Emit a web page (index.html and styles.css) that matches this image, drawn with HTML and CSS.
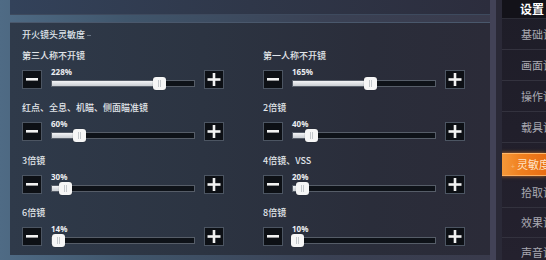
FILE: index.html
```html
<!DOCTYPE html>
<html lang="zh">
<head>
<meta charset="utf-8">
<title>灵敏度设置</title>
<link rel="stylesheet" href="styles.css">
</head>
<body>
<div class="screen">
  <div class="stage">
    <div class="top-panel"></div>
    <section class="panel">
      <h2 class="title">开火镜头灵敏度<span class="title-line"></span></h2>
      <div class="grid">
        <div class="setting">
          <div class="label">第三人称不开镜</div>
          <div class="ctrl">
            <button class="btn"><svg width="20" height="19" viewBox="0 0 20 19"><rect x="4" y="8" width="12" height="2.6" fill="#f2f2f2"/></svg></button>
            <div class="slider" style="--v:0.76">
              <div class="pct">228%</div>
              <div class="track"><div class="fill"></div><div class="thumb"></div></div>
            </div>
            <button class="btn"><svg width="20" height="19" viewBox="0 0 20 19"><rect x="3.5" y="8.2" width="13" height="2.6" fill="#f2f2f2"/><rect x="8.7" y="3" width="2.6" height="13" fill="#f2f2f2"/></svg></button>
          </div>
        </div>
        <div class="setting">
          <div class="label">第一人称不开镜</div>
          <div class="ctrl">
            <button class="btn"><svg width="20" height="19" viewBox="0 0 20 19"><rect x="4" y="8" width="12" height="2.6" fill="#f2f2f2"/></svg></button>
            <div class="slider" style="--v:0.55">
              <div class="pct">165%</div>
              <div class="track"><div class="fill"></div><div class="thumb"></div></div>
            </div>
            <button class="btn"><svg width="20" height="19" viewBox="0 0 20 19"><rect x="3.5" y="8.2" width="13" height="2.6" fill="#f2f2f2"/><rect x="8.7" y="3" width="2.6" height="13" fill="#f2f2f2"/></svg></button>
          </div>
        </div>
        <div class="setting">
          <div class="label">红点、全息、机瞄、侧面瞄准镜</div>
          <div class="ctrl">
            <button class="btn"><svg width="20" height="19" viewBox="0 0 20 19"><rect x="4" y="8" width="12" height="2.6" fill="#f2f2f2"/></svg></button>
            <div class="slider" style="--v:0.2">
              <div class="pct">60%</div>
              <div class="track"><div class="fill"></div><div class="thumb"></div></div>
            </div>
            <button class="btn"><svg width="20" height="19" viewBox="0 0 20 19"><rect x="3.5" y="8.2" width="13" height="2.6" fill="#f2f2f2"/><rect x="8.7" y="3" width="2.6" height="13" fill="#f2f2f2"/></svg></button>
          </div>
        </div>
        <div class="setting">
          <div class="label">2倍镜</div>
          <div class="ctrl">
            <button class="btn"><svg width="20" height="19" viewBox="0 0 20 19"><rect x="4" y="8" width="12" height="2.6" fill="#f2f2f2"/></svg></button>
            <div class="slider" style="--v:0.133">
              <div class="pct">40%</div>
              <div class="track"><div class="fill"></div><div class="thumb"></div></div>
            </div>
            <button class="btn"><svg width="20" height="19" viewBox="0 0 20 19"><rect x="3.5" y="8.2" width="13" height="2.6" fill="#f2f2f2"/><rect x="8.7" y="3" width="2.6" height="13" fill="#f2f2f2"/></svg></button>
          </div>
        </div>
        <div class="setting">
          <div class="label">3倍镜</div>
          <div class="ctrl">
            <button class="btn"><svg width="20" height="19" viewBox="0 0 20 19"><rect x="4" y="8" width="12" height="2.6" fill="#f2f2f2"/></svg></button>
            <div class="slider" style="--v:0.1">
              <div class="pct">30%</div>
              <div class="track"><div class="fill"></div><div class="thumb"></div></div>
            </div>
            <button class="btn"><svg width="20" height="19" viewBox="0 0 20 19"><rect x="3.5" y="8.2" width="13" height="2.6" fill="#f2f2f2"/><rect x="8.7" y="3" width="2.6" height="13" fill="#f2f2f2"/></svg></button>
          </div>
        </div>
        <div class="setting">
          <div class="label">4倍镜、VSS</div>
          <div class="ctrl">
            <button class="btn"><svg width="20" height="19" viewBox="0 0 20 19"><rect x="4" y="8" width="12" height="2.6" fill="#f2f2f2"/></svg></button>
            <div class="slider" style="--v:0.067">
              <div class="pct">20%</div>
              <div class="track"><div class="fill"></div><div class="thumb"></div></div>
            </div>
            <button class="btn"><svg width="20" height="19" viewBox="0 0 20 19"><rect x="3.5" y="8.2" width="13" height="2.6" fill="#f2f2f2"/><rect x="8.7" y="3" width="2.6" height="13" fill="#f2f2f2"/></svg></button>
          </div>
        </div>
        <div class="setting">
          <div class="label">6倍镜</div>
          <div class="ctrl">
            <button class="btn"><svg width="20" height="19" viewBox="0 0 20 19"><rect x="4" y="8" width="12" height="2.6" fill="#f2f2f2"/></svg></button>
            <div class="slider" style="--v:0.047">
              <div class="pct">14%</div>
              <div class="track"><div class="fill"></div><div class="thumb"></div></div>
            </div>
            <button class="btn"><svg width="20" height="19" viewBox="0 0 20 19"><rect x="3.5" y="8.2" width="13" height="2.6" fill="#f2f2f2"/><rect x="8.7" y="3" width="2.6" height="13" fill="#f2f2f2"/></svg></button>
          </div>
        </div>
        <div class="setting">
          <div class="label">8倍镜</div>
          <div class="ctrl">
            <button class="btn"><svg width="20" height="19" viewBox="0 0 20 19"><rect x="4" y="8" width="12" height="2.6" fill="#f2f2f2"/></svg></button>
            <div class="slider" style="--v:0.033">
              <div class="pct">10%</div>
              <div class="track"><div class="fill"></div><div class="thumb"></div></div>
            </div>
            <button class="btn"><svg width="20" height="19" viewBox="0 0 20 19"><rect x="3.5" y="8.2" width="13" height="2.6" fill="#f2f2f2"/><rect x="8.7" y="3" width="2.6" height="13" fill="#f2f2f2"/></svg></button>
          </div>
        </div>
      </div>
    </section>
  </div>
  <nav class="sidebar">
    <div class="side-head">设置</div>
    <div class="side-item">基础设置</div>
    <div class="side-item">画面设置</div>
    <div class="side-item">操作设置</div>
    <div class="side-item">载具设置</div>
    <div class="side-active"><div class="active-tab"><span class="tab-mark">+</span>灵敏度设置</div></div>
    <div class="side-item short">拾取设置</div>
    <div class="side-item short">效果设置</div>
    <div class="side-item short">声音设置</div>
  </nav>
</div>
</body>
</html>
```

FILE: styles.css
```css
html, body {
  margin: 0;
  padding: 0;
}
body {
  width: 546px;
  height: 260px;
  overflow: hidden;
  font-family: "Noto Sans CJK SC", "Noto Sans", sans-serif;
  background: #2c2c3a;
}
.screen {
  display: flex;
  width: 546px;
  height: 260px;
}
.stage {
  width: 502px;
  flex: none;
  box-sizing: border-box;
  padding: 0 12px 0 10px;
  display: flex;
  flex-direction: column;
  background:
    linear-gradient(90deg, transparent 490px, #424257 490px, #424257 496px, #2a2937 496px),
    linear-gradient(90deg, #4f6b85 0%, #40566c 25%, #3a4154 65%, #393a4b 100%);
}
.top-panel {
  height: 15px;
  flex: none;
  background: linear-gradient(90deg, #33425a 0%, #2f3749 50%, #2c2d3d 100%);
  border-bottom: 1px solid #3e4a5e;
  box-sizing: border-box;
}
.panel {
  margin-top: 7px;
  height: 233px;
  flex: none;
  box-sizing: border-box;
  padding: 6px 0 0 12px;
  border-top: 1px solid #4a586c;
  background: linear-gradient(90deg, #2f3a4a 0%, #2c3442 40%, #2a2d3a 75%, #2b2b38 100%);
}
.title {
  margin: 0 0 9px;
  font-size: 9px;
  line-height: 12px;
  height: 12px;
  font-weight: 500;
  color: #dfe4ea;
  display: flex;
  align-items: center;
}
.title-line {
  display: inline-block;
  width: 4px;
  height: 1px;
  margin-left: 2px;
  background: #6c7888;
}
.grid {
  display: grid;
  grid-template-columns: 202px 202px;
  column-gap: 39px;
  row-gap: 13.3px;
}
.setting {
  display: flex;
  flex-direction: column;
}
.label {
  font-size: 9px;
  line-height: 12px;
  height: 12px;
  margin-bottom: 8px;
  white-space: nowrap;
  color: #e2e6ea;
  font-weight: 500;
}
.ctrl {
  display: flex;
  align-items: flex-start;
  gap: 9px;
  height: 19px;
}
.btn {
  width: 20px;
  height: 19px;
  flex: none;
  box-sizing: border-box;
  padding: 0;
  margin: 0;
  border: 1px solid #4c5562;
  background: #0d1015;
  display: flex;
  align-items: center;
  justify-content: center;
}
.btn svg {
  display: block;
  margin: -1px;
}
.slider {
  flex: 1;
  min-width: 0;
  display: flex;
  flex-direction: column;
}
.pct {
  font-family: "Noto Sans", "DejaVu Sans", sans-serif;
  font-size: 8px;
  font-weight: 700;
  line-height: 8px;
  height: 8px;
  margin-top: -2px;
  color: #eceef1;
}
.track {
  position: relative;
  margin-top: 4px;
  height: 7px;
  box-sizing: border-box;
  border: 1px solid #565d68;
  background: #0e1218;
}
.fill {
  position: absolute;
  left: 0;
  top: 0;
  bottom: 0;
  width: calc(var(--v) * 100%);
  background: linear-gradient(#f3f4f6, #c9cdd2);
}
.thumb {
  position: absolute;
  top: -4px;
  left: calc(var(--v) * 100% - 7px);
  width: 13px;
  height: 13px;
  border-radius: 3px;
  background: #f6f6f6;
  box-shadow: 0 0 1px rgba(0, 0, 0, 0.5);
}
.thumb::after {
  content: "";
  position: absolute;
  left: 5px;
  top: 3px;
  width: 1px;
  height: 7px;
  background: #c4c8cc;
  box-shadow: 2px 0 0 #c4c8cc;
}
.sidebar {
  width: 44px;
  flex: none;
  overflow: hidden;
  background: linear-gradient(#1e1d28, #24212e);
  font-size: 11px;
  color: #a9a9b1;
}
.side-head {
  height: 19px;
  line-height: 18px;
  padding-left: 18px;
  font-size: 12px;
  font-weight: 700;
  color: #ffffff;
  background: #131219;
  border-bottom: 1px solid #2c2c36;
  box-sizing: border-box;
  white-space: nowrap;
}
.side-item {
  height: 31px;
  box-sizing: border-box;
  line-height: 30px;
  padding-left: 19px;
  border-bottom: 1px solid #33323e;
  white-space: nowrap;
}
.side-item.short {
  height: 30px;
  line-height: 29px;
}
.side-active {
  height: 35px;
  box-sizing: border-box;
  padding-top: 10px;
}
.active-tab {
  height: 23px;
  margin-left: -2px;
  box-sizing: border-box;
  padding-left: 11px;
  line-height: 21px;
  white-space: nowrap;
  color: #ffe4c6;
  background: linear-gradient(90deg, #f69b3c 0%, #f0801f 45%, #e86d14 100%);
  box-shadow: 0 0 4px rgba(255, 140, 40, 0.7);
  border-top: 1px solid #ffb76a;
  border-bottom: 1px solid #ffb060;
}
.tab-mark {
  font-size: 7px;
  color: rgba(255, 225, 190, 0.5);
  margin-right: 2px;
}
```
